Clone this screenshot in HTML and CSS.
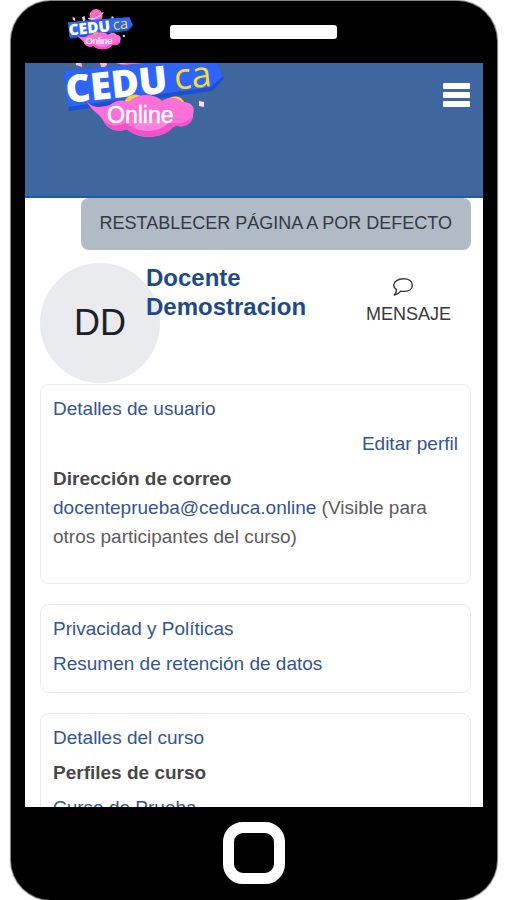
FILE: index.html
```html
<!DOCTYPE html>
<html lang="es">
<head>
    <meta charset="UTF-8">
    <meta name="viewport" content="width=device-width, initial-scale=1">
    <title>CEDUca Online - Perfil</title>
    <link rel="stylesheet" href="styles.css">
</head>
<body>
    <!-- Logo compartido -->
    <svg class="sprite" aria-hidden="true">
        <symbol id="logo" viewBox="0 0 160 102">
            <circle cx="69" cy="18" r="16" fill="#fb6cbf"/>
            <path d="M56 28a16 16 0 0 0 29-8c-7 7-18 10-29 8z" fill="#ee4fae"/>
            <path d="M51 25c10 4 29-4 35-14" fill="none" stroke="#ffd3ec" stroke-width="3" stroke-linecap="round"/>
            <path d="M11 21l6 2 1 8-6-2zM34 22l7-3 2 10-5 4zM108 19l5 3-3 8-5-2z" fill="#ffb5df"/>
            <path d="M0 35L84 27 151 22 160 43 148 55 5 75z" fill="#1d4fd1"/>
            <path d="M0 35L84 27 151 22 159 40 147 51 4 71z" fill="#2e64f7"/>
            <path d="M60 66c4-9 17-10 21-1zM103 65c3-6 14-6 17 1z" fill="#ffd23a"/>
            <path d="M23 66c7 7 15 5 23 3 6-6 14-5 19-3 8-9 25-9 33-1 7-5 16-4 20 1 9-1 14 6 11 12 1 8-7 14-15 12-4 0-5 1-7 3-9 10-34 11-44 0-8 4-19 1-23-7-4-9-11-9-17-20z" fill="#fc70d7"/>
            <path d="M39 84c6 7 14 7 23 3 10 11 34 9 43-1 7 3 16 2 23-5 0 6-7 11-14 9-4 0-5 1-7 3-9 10-34 11-44 0-9 4-20 0-24-9z" fill="#f450cb"/>
            <path d="M70 91c6-8 24-11 34-4-6 8-24 11-34 4z" fill="#ff80df"/>
            <path d="M135 65l5 1v5l-5-1z" fill="#ffd9f5"/>
            <g transform="rotate(-6 4 66)">
                <text class="logo-main" x="3" y="67">CEDU</text>
                <text class="logo-accent" x="112" y="65">ca</text>
            </g>
            <text class="logo-sub" x="43" y="87">Online</text>
        </symbol>
    </svg>

    <div class="phone">
        <div class="phone-top">
            <svg class="logo-small" role="img" aria-label="CEDUca Online"><use href="#logo"/></svg>
            <div class="speaker"></div>
        </div>

        <div class="screen">
            <header class="navbar">
                <a href="#" class="brand" aria-label="CEDUca Online">
                    <svg class="logo-large"><use href="#logo"/></svg>
                </a>
                <button type="button" class="menu-btn" aria-label="Menú">
                    <span></span>
                    <span></span>
                    <span></span>
                </button>
            </header>

            <main class="content">
                <button type="button" class="reset-btn">RESTABLECER PÁGINA A POR DEFECTO</button>

                <div class="profile">
                    <div class="avatar">DD</div>
                    <h1 class="name">Docente Demostracion</h1>
                    <a href="#" class="message">
                        <svg class="message-icon" viewBox="0 0 20 18" aria-hidden="true">
                            <path d="M10.500 1.500C15.500 1.500 18.500 4 18.500 7.300S15.500 13 10.500 13C9.600 13 8.800 12.900 8 12.700 6.500 14.600 4.500 15.800 2.200 16.300 3.300 14.900 4 13.500 4.100 11.400 2.500 10.300 1.500 9 1.500 7.300 1.500 4 5.500 1.500 10.500 1.500z" fill="none" stroke="currentColor" stroke-width="1.300" stroke-linejoin="round"/>
                        </svg>
                        <span>MENSAJE</span>
                    </a>
                </div>

                <section class="card card-user">
                    <h2>Detalles de usuario</h2>
                    <a href="#" class="edit-link">Editar perfil</a>
                    <dl>
                        <dt>Dirección de correo</dt>
                        <dd><a href="#">docenteprueba@ceduca.online</a> (Visible para otros participantes del curso)</dd>
                    </dl>
                </section>

                <section class="card">
                    <h2>Privacidad y Políticas</h2>
                    <a href="#">Resumen de retención de datos</a>
                </section>

                <section class="card">
                    <h2>Detalles del curso</h2>
                    <h3>Perfiles de curso</h3>
                    <a href="#">Curso de Prueba</a>
                </section>
            </main>
        </div>

        <div class="phone-bottom">
            <button type="button" class="home-btn" aria-label="Inicio"></button>
        </div>
    </div>
</body>
</html>
```
FILE: styles.css
```css
* {
    margin: 0;
    padding: 0;
    box-sizing: border-box;
}

body {
    background: #fff;
    font-family: 'Liberation Sans', Arial, sans-serif;
    font-size: 19px;
    line-height: 29px;
    color: #5c5c5c;
}

a {
    color: #34558f;
    text-decoration: none;
}

button {
    border: none;
    font-family: inherit;
    cursor: pointer;
}

/* Logo */
.sprite {
    position: absolute;
    width: 0;
    height: 0;
}

.logo-main {
    font-family: 'Open Sans', sans-serif;
    font-size: 38px;
    font-weight: 800;
    fill: #fff;
}

.logo-accent {
    font-family: 'Open Sans', sans-serif;
    font-size: 36px;
    font-weight: 500;
    fill: #f5df2e;
}

.logo-sub {
    font-family: 'Liberation Sans', Arial, sans-serif;
    font-size: 23px;
    fill: #fff;
    stroke: #fff;
    stroke-width: 0.5px;
}

/* Marco del teléfono */
.phone {
    display: flex;
    flex-direction: column;
    height: calc(100vh - 1px);
    margin: 1px 9px 0 11px;
    padding: 0 14px;
    background: #000;
    border-radius: 40px;
    box-shadow: 0 0 1px 1px #777;
}

.phone-top {
    display: flex;
    align-items: center;
    flex: none;
    gap: 37px;
    height: 62px;
    padding-left: 43px;
}

.logo-small {
    width: 65px;
    height: 42px;
    margin-bottom: 6px;
}

.speaker {
    width: 167px;
    height: 14px;
    background: #fff;
    border-radius: 3px;
}

.phone-bottom {
    display: flex;
    flex: none;
    justify-content: center;
    height: 93px;
    padding-top: 15px;
}

.home-btn {
    width: 62px;
    height: 62px;
    background: #000;
    border: 11px solid #fff;
    border-radius: 20px;
}

.screen {
    flex: 1;
    min-height: 0;
    overflow: hidden;
    background: #fff;
}

/* Cabecera */
.navbar {
    display: flex;
    justify-content: space-between;
    align-items: flex-start;
    height: 135px;
    padding: 0 13px 0 39px;
    background: #4066a0;
    border-bottom: 2px solid #1f5b9e;
}

.brand {
    margin-top: -27px;
}

.logo-large {
    display: block;
    width: 160px;
    height: 102px;
}

.menu-btn {
    display: flex;
    flex-direction: column;
    gap: 3px;
    width: 27px;
    margin-top: 20px;
    background: none;
}

.menu-btn span {
    width: 100%;
    height: 6px;
    background: #fff;
    border-radius: 1px;
}

/* Contenido */
.content {
    display: flex;
    flex-direction: column;
    padding: 0 12px 0 15px;
}

.reset-btn {
    align-self: flex-end;
    height: 52px;
    padding: 0 19px 2px;
    background: #b1bbc6;
    border-radius: 8px;
    font-size: 18px;
    color: #343a40;
    white-space: nowrap;
}

.profile {
    display: flex;
    align-items: flex-start;
    margin: 13px 0 1px;
}

.avatar {
    flex: none;
    width: 120px;
    height: 120px;
    background: #e9ebef;
    border-radius: 50%;
    font-size: 36px;
    line-height: 120px;
    text-align: center;
    color: #1d2125;
}

.name {
    flex: 1;
    margin-left: -14px;
    font-size: 24px;
    line-height: 29px;
    color: #204a87;
}

.message {
    display: flex;
    flex-direction: column;
    align-items: center;
    padding: 14px 20px 0 0;
    font-size: 18px;
    line-height: 34px;
    color: #343a40;
}

.message-icon {
    width: 22px;
    height: 20px;
    margin-right: 10px;
}

/* Tarjetas */
.card {
    display: flex;
    flex-direction: column;
    align-items: flex-start;
    gap: 6px;
    margin-bottom: 20px;
    padding: 9px 12px 14px;
    border: 1px solid #e9eaec;
    border-radius: 9px;
}

.card-user {
    padding-bottom: 32px;
}

.card h2 {
    font-size: 19px;
    font-weight: 400;
    color: #34558f;
}

.card h3,
.card dt {
    font-size: 19px;
    font-weight: 700;
    color: #484848;
}

.edit-link {
    align-self: flex-end;
}
```
